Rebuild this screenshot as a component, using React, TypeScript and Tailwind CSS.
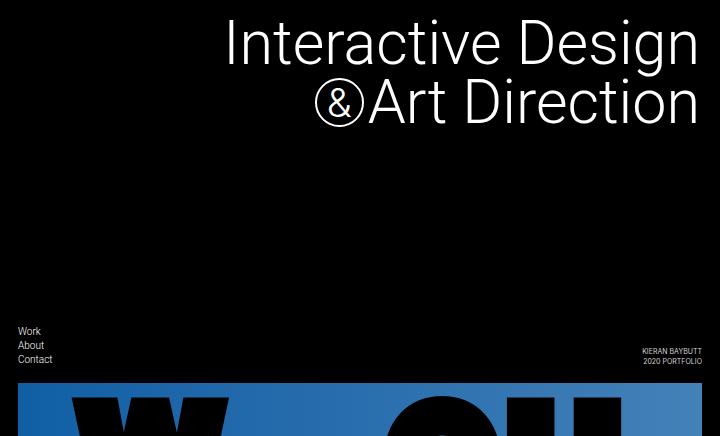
const links = ["Work", "About", "Contact"];

function Ampersand() {
  return (
    <span className="flex size-[49px] items-center justify-center rounded-full border-2 border-white font-['Inter',sans-serif] text-[40px] leading-none font-light">
      &amp;
    </span>
  );
}

export default function App() {
  return (
    <div className="h-screen overflow-hidden bg-black font-['Roboto',sans-serif] text-white">
      <header className="px-[18px] pt-[14px]">
        <h1 className="flex flex-col items-end pr-0.5 text-[61px] leading-[59px] font-light whitespace-nowrap">
          <span>Interactive Design</span>
          <span className="flex items-center gap-1">
            <Ampersand />
            <span>Art Direction</span>
          </span>
        </h1>
        <div className="mt-[193px] flex items-end justify-between">
          <nav aria-label="Main">
            <ul className="text-[10px] leading-[14px] font-light text-white">
              {links.map((label) => (
                <li key={label}>
                  <a href={`#${label.toLowerCase()}`}>{label}</a>
                </li>
              ))}
            </ul>
          </nav>
          <p className="text-right font-['Inter',sans-serif] text-[7px] leading-[10px] text-neutral-300">
            KIERAN BAYBUTT
            <br />
            2020 PORTFOLIO
          </p>
        </div>
      </header>
      <section
        aria-label="Featured work"
        className="mx-[18px] mt-4 h-96 overflow-hidden bg-linear-to-r from-[#0f5fa5] via-[#296eae] to-[#4381b8]"
      >
        <div className="flex items-start pl-[63px] text-[160px] leading-[166px] font-black text-black [-webkit-text-stroke:18px_black]">
          <span className="w-[306px]">W</span>
          <span className="w-[120px]">O</span>
          <span className="text-[172px] leading-[175px]">U</span>
        </div>
      </section>
    </div>
  );
}
